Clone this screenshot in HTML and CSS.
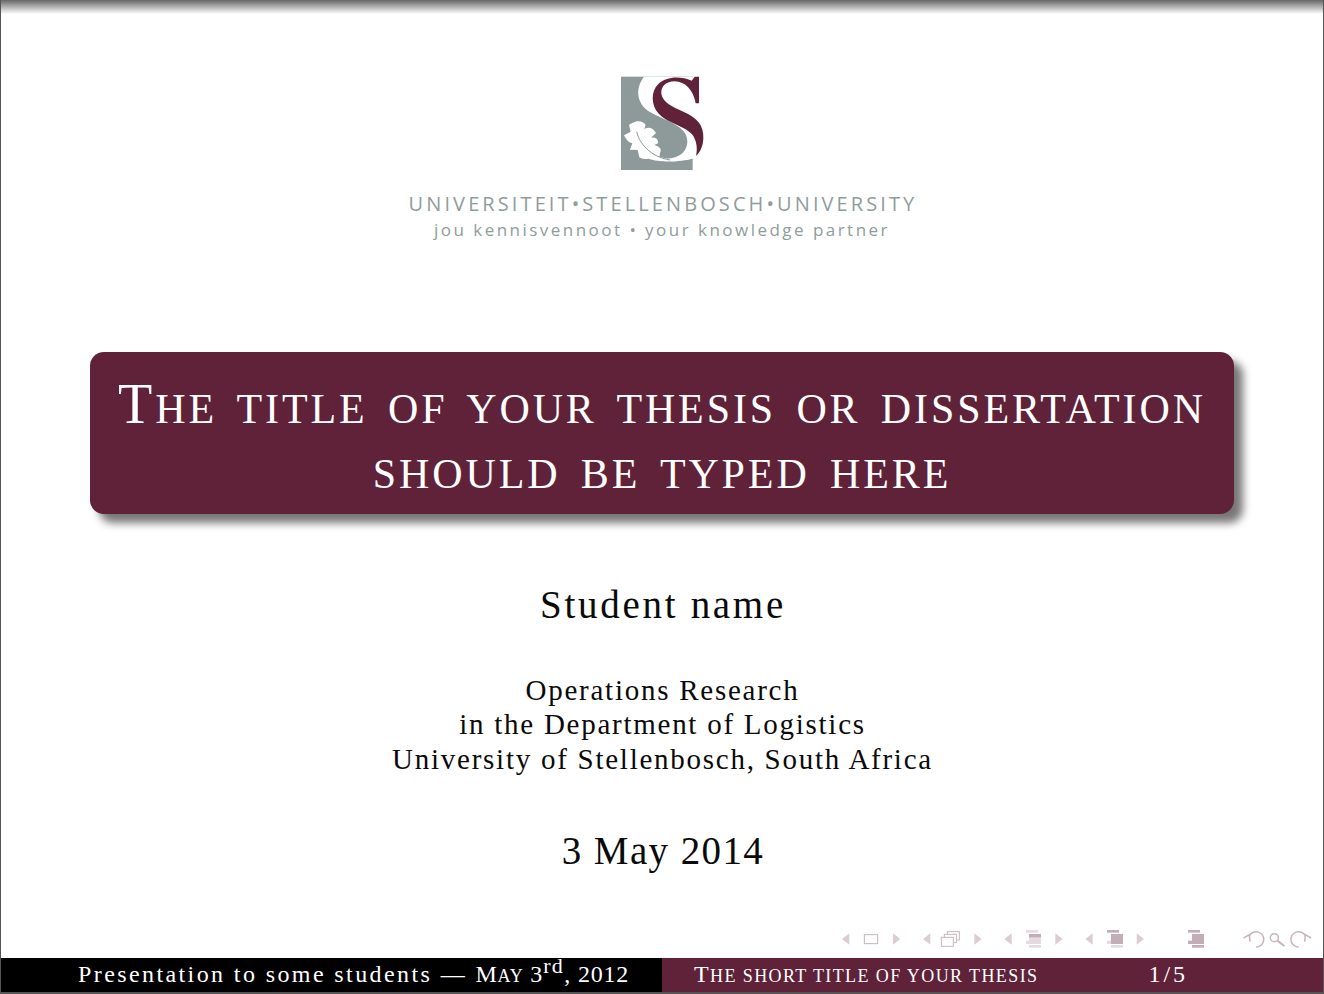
FILE: index.html
```html
<!DOCTYPE html>
<html lang="en">
<head>
    <meta charset="UTF-8">
    <title>The title of your thesis</title>
    <link rel="stylesheet" href="styles.css">
</head>
<body>
    <div class="slide">
        <div class="logo">
            <svg class="crest" width="130" height="125" viewBox="0 0 390 375">
                <rect x="63" y="50" width="215" height="280" fill="#8d9a99"/>
                <path d="M132,50 C104,86 110,132 150,156 C190,180 264,196 262,245 C260,283 226,298 188,296 L190,304 C220,306 255,302 278,296 L300,250 L290,120 L297,50 Z" fill="#fff"/>
                <path d="M297,50 L297,130 L287,130 C281,92 256,64 224,64 C198,64 182,80 184,101 C187,125 216,140 250,155 C290,172 312,195 310,235 C309,258 302,275 288,288 C292,270 292,250 280,228 C262,200 200,190 175,160 C153,134 152,95 175,72 C197,50 240,46 275,62 L284,50 Z" fill="#5f2238"/>
                <path d="M110,184 Q127,182 137,194 L133,207 Q154,196 168,219 L153,233 Q175,230 174,250 L163,255 Q188,262 181,276 L178,290 L215,300 L185,304 Q165,302 145,296 Q128,300 118,292 L113,270 Q98,268 90,270 L97,250 Q82,248 72,226 L92,215 L87,194 Q98,188 110,184 Z" fill="#fff"/>
                <path d="M110,215 C118,250 150,290 210,300" fill="none" stroke="#8d9a99" stroke-width="3"/>
            </svg>
            <div class="logo-name">UNIVERSITEIT•STELLENBOSCH•UNIVERSITY</div>
            <div class="logo-motto">jou kennisvennoot • your knowledge partner</div>
        </div>

        <div class="title-box">
            <div class="title-line"><span class="big-cap">T</span>HE TITLE OF YOUR THESIS OR DISSERTATION</div>
            <div class="title-line">SHOULD BE TYPED HERE</div>
        </div>

        <div class="student">Student name</div>
        <div class="dept">
            <div>Operations Research</div>
            <div>in the Department of Logistics</div>
            <div>University of Stellenbosch, South Africa</div>
        </div>
        <div class="date">3 May 2014</div>

        <div class="nav">
            <svg width="494" height="40" viewBox="0 -6 1482 120">
                <g fill="#dccdd3">
                    <path d="M58,40 L36,57 L58,74 Z"/>
                    <path d="M189,40 L211,57 L189,74 Z"/>
                    <path d="M301,40 L279,57 L301,74 Z"/>
                    <path d="M433,40 L455,57 L433,74 Z"/>
                    <path d="M545,40 L523,57 L545,74 Z"/>
                    <path d="M676,40 L698,57 L676,74 Z"/>
                    <path d="M788,40 L766,57 L788,74 Z"/>
                    <path d="M920,40 L942,57 L920,74 Z"/>
                </g>
                <g fill="#fff" stroke="#c9b4bc" stroke-width="3">
                    <rect x="103" y="44" width="40" height="27"/>
                    <rect x="352" y="35" width="36" height="25"/>
                    <rect x="343" y="43" width="36" height="25"/>
                    <rect x="334" y="52" width="36" height="27"/>
                </g>
                <g fill="#e5dadf">
                    <rect x="588" y="30" width="36" height="8"/>
                    <rect x="597" y="42" width="36" height="30"/>
                    <rect x="588" y="62" width="9" height="10"/>
                    <rect x="597" y="75" width="36" height="8"/>
                </g>
                <rect x="597" y="42" width="36" height="10" fill="#c3adb6"/>
                <g fill="#c3adb6">
                    <rect x="831" y="30" width="36" height="8"/>
                    <rect x="843" y="42" width="36" height="30"/>
                </g>
                <g fill="#e5dadf">
                    <rect x="831" y="62" width="12" height="10"/>
                    <rect x="843" y="75" width="36" height="8"/>
                </g>
                <g fill="#c3adb6">
                    <rect x="1074" y="30" width="36" height="8"/>
                    <rect x="1086" y="42" width="36" height="30"/>
                    <rect x="1074" y="62" width="12" height="10"/>
                    <rect x="1086" y="75" width="36" height="8"/>
                </g>
                <g fill="none" stroke="#c9b4bc" stroke-width="4.5">
                    <path d="M1258,47 A23,23 0 1 1 1278,81"/>
                    <path d="M1241,54 L1258,44 L1260,65"/>
                    <circle cx="1333" cy="53" r="12"/>
                    <path d="M1342,62 L1363,78" stroke-width="6"/>
                    <path d="M1426,47 A23,23 0 1 0 1406,81"/>
                    <path d="M1443,54 L1426,44 L1424,65"/>
                </g>
            </svg>
        </div>

        <div class="footer">
            <div class="foot-left">Presentation to some students — <span class="foot-date">M<small>AY</small> 3<sup>rd</sup>, 2012</span></div>
            <div class="foot-right">
                <span class="foot-title">T<small>HE SHORT TITLE OF YOUR THESIS</small></span>
                <span class="foot-page">1/5</span>
            </div>
        </div>
    </div>
</body>
</html>
```

FILE: styles.css
```css
html, body {
    margin: 0;
    padding: 0;
}
body {
    font-family: "Liberation Serif", serif;
    color: #0a0a0a;
    background: #fff;
}
.slide {
    height: 994px;
    box-sizing: border-box;
    display: flex;
    flex-direction: column;
    align-items: center;
    text-align: center;
    overflow: hidden;
    border-left: 1px solid #555;
    border-right: 1px solid #555;
    border-bottom: 2px solid #555;
    background: linear-gradient(#666, #fff 14px) no-repeat;
}
.logo {
    padding-top: 60px;
    color: #8f9c9c;
    height: 352px;
    box-sizing: border-box;
}
.crest {
    display: block;
    position: relative;
    left: 3px;
    margin: 0 auto;
}
.logo-name {
    font-family: "Open Sans", sans-serif;
    font-size: 20px;
    letter-spacing: 3.1px;
    line-height: 28px;
    margin-top: 5px;
    padding-left: 2px;
}
.logo-motto {
    font-family: "Open Sans", sans-serif;
    font-size: 17px;
    letter-spacing: 2.47px;
    line-height: 24px;
}
.title-box {
    width: 1144px;
    height: 162px;
    box-sizing: border-box;
    padding-top: 20px;
    background: #5f2238;
    color: #fff;
    border-radius: 14px;
    box-shadow: 9px 9px 9px #777;
}
.title-line {
    font-size: 42px;
    line-height: 65px;
    letter-spacing: 2.88px;
    word-spacing: 7px;
}
.big-cap {
    font-size: 56px;
}
.student {
    font-size: 39px;
    letter-spacing: 2.7px;
    line-height: 46px;
    margin-top: 68px;
    padding-left: 2px;
}
.dept {
    font-size: 29px;
    line-height: 34.5px;
    letter-spacing: 1.74px;
    margin-top: 44.75px;
    padding-left: 1px;
}
.date {
    font-size: 39px;
    letter-spacing: 1.4px;
    line-height: 46px;
    margin-top: 51.25px;
    padding-left: 2px;
}
.nav {
    margin-top: auto;
    margin-right: -1px;
    align-self: flex-end;
    display: flex;
    height: 40px;
}
.footer {
    align-self: stretch;
    height: 34px;
    display: flex;
    color: #fff;
    font-size: 24px;
    line-height: 33px;
    letter-spacing: 2.4px;
}
.foot-left {
    width: 661px;
    box-sizing: border-box;
    padding-left: 77px;
    background: #000;
    text-align: left;
    white-space: nowrap;
}
.foot-date {
    letter-spacing: 0.8px;
}
.foot-left sup {
    font-size: 22px;
    letter-spacing: 1.4px;
    line-height: 0;
}
.foot-left small {
    font-size: 18px;
}
.foot-title {
    letter-spacing: 1.4px;
}
.foot-title small {
    font-size: 18px;
}
.foot-right {
    flex: 1;
    display: flex;
    padding-left: 32px;
    background: #5f2238;
    white-space: nowrap;
}
.foot-page {
    margin-left: 110px;
    letter-spacing: 3px;
}
```
